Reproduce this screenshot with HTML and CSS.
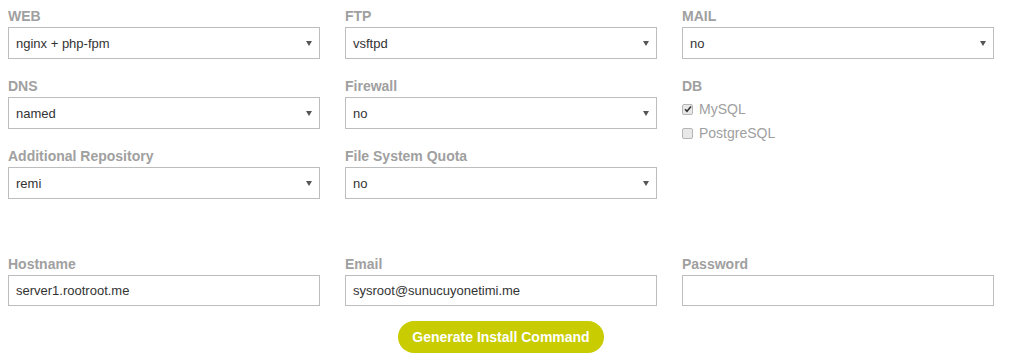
FILE: index.html
```html
<!DOCTYPE html>
<html lang="en">
<head>
    <meta charset="UTF-8">
    <title>Install Command Generator</title>
    <link rel="stylesheet" href="styles.css">
</head>
<body>
<form class="installer">
    <div class="grid">
        <div class="field">
            <label>WEB</label>
            <div class="select-wrap">
                <select><option>nginx + php-fpm</option></select>
                <span class="arrow"></span>
            </div>
        </div>
        <div class="field">
            <label>FTP</label>
            <div class="select-wrap">
                <select><option>vsftpd</option></select>
                <span class="arrow"></span>
            </div>
        </div>
        <div class="field">
            <label>MAIL</label>
            <div class="select-wrap">
                <select><option>no</option></select>
                <span class="arrow"></span>
            </div>
        </div>

        <div class="field">
            <label>DNS</label>
            <div class="select-wrap">
                <select><option>named</option></select>
                <span class="arrow"></span>
            </div>
        </div>
        <div class="field">
            <label>Firewall</label>
            <div class="select-wrap">
                <select><option>no</option></select>
                <span class="arrow"></span>
            </div>
        </div>
        <div class="field db">
            <label>DB</label>
            <div class="check">
                <span class="box checked">
                    <svg width="8" height="8" viewBox="0 0 8 8"><path d="M1 4.2 L3 6.3 L7 1.5" fill="none" stroke="#333" stroke-width="1.6"/></svg>
                </span>
                MySQL
            </div>
            <div class="check">
                <span class="box"></span>
                PostgreSQL
            </div>
        </div>

        <div class="field">
            <label>Additional Repository</label>
            <div class="select-wrap">
                <select><option>remi</option></select>
                <span class="arrow"></span>
            </div>
        </div>
        <div class="field">
            <label>File System Quota</label>
            <div class="select-wrap">
                <select><option>no</option></select>
                <span class="arrow"></span>
            </div>
        </div>
    </div>

    <div class="grid account">
        <div class="field">
            <label>Hostname</label>
            <input type="text" value="server1.rootroot.me">
        </div>
        <div class="field">
            <label>Email</label>
            <input type="text" value="sysroot@sunucuyonetimi.me">
        </div>
        <div class="field">
            <label>Password</label>
            <input type="password">
        </div>
    </div>

    <div class="actions">
        <button type="button" class="generate">Generate Install Command</button>
    </div>
</form>
</body>
</html>
```

FILE: styles.css
```css
body {
    margin: 8px;
    font-family: 'Liberation Sans', Arial, sans-serif;
    background: #fff;
}

.installer {
    width: 986px;
}

.grid {
    display: grid;
    grid-template-columns: repeat(3, 312px);
    column-gap: 25px;
}

.field {
    margin-bottom: 19px;
}

.field label {
    display: block;
    font-size: 14px;
    line-height: 16px;
    font-weight: bold;
    color: #a0a0a0;
    margin-bottom: 3px;
}

.select-wrap {
    position: relative;
}

.select-wrap select,
.field input {
    display: block;
    width: 100%;
    height: 32px;
    box-sizing: border-box;
    border: 1px solid #bdbdbd;
    border-radius: 0;
    background: #fff;
    padding: 0 7px;
    font-family: 'Liberation Sans', Arial, sans-serif;
    font-size: 13px;
    color: #333;
    appearance: none;
    -webkit-appearance: none;
    outline: none;
}

.select-wrap .arrow {
    position: absolute;
    right: 8px;
    top: 14px;
    width: 0;
    height: 0;
    border-left: 3.5px solid transparent;
    border-right: 3.5px solid transparent;
    border-top: 5px solid #555;
    pointer-events: none;
}

.db {
    grid-row: span 2;
}

.db .check {
    display: flex;
    align-items: center;
    height: 24px;
    font-size: 14px;
    color: #a0a0a0;
}

.db label + .check {
    margin-top: 2px;
}

.box {
    width: 9px;
    height: 9px;
    border: 1px solid #b5b5b5;
    border-radius: 2px;
    background: #e8e8e8;
    margin-right: 6px;
    display: flex;
    align-items: center;
    justify-content: center;
}

.account {
    margin-top: 38px;
}

.account .field {
    margin-bottom: 0;
}

.field input {
    height: 31px;
}

.actions {
    display: flex;
    justify-content: center;
    margin-top: 15px;
}

.generate {
    height: 32px;
    padding: 0 14px;
    border: none;
    border-radius: 16px;
    background: #c8cc00;
    color: #fff;
    font-family: 'Liberation Sans', Arial, sans-serif;
    font-size: 14px;
    font-weight: bold;
    cursor: pointer;
}
```
